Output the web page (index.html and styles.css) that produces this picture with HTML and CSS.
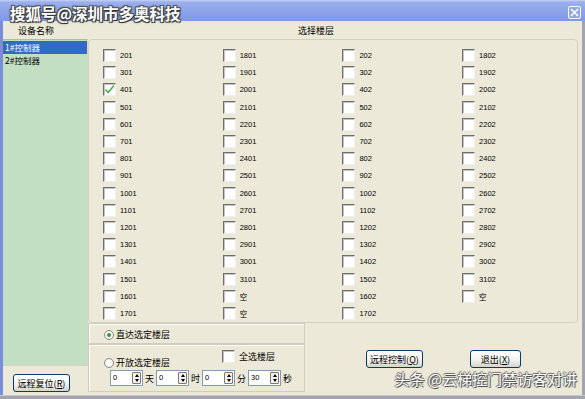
FILE: index.html
```html
<!DOCTYPE html>
<html>
<head>
  <meta charset="utf-8">
  <title>选择楼层</title>
  <link rel="stylesheet" href="styles.css">
</head>
<body>
  <div class="window">
    <div class="titlebar">
      <span class="mark">搜狐号@深圳市多奥科技</span>
      <span class="close">
        <svg width="9" height="9" viewBox="0 0 9 9"><path d="M1 1 L8 8 M8 1 L1 8" stroke="#fff" stroke-width="1.6"/></svg>
      </span>
    </div>

    <div class="main">
      <div class="left">
        <div class="head">设备名称</div>
        <ul class="list">
          <li class="sel">1#控制器</li>
          <li>2#控制器</li>
        </ul>
        <div class="left-foot">
          <button class="btn btn-reset">远程复位(<u>R</u>)</button>
        </div>
      </div>

      <div class="right">
        <div class="head head-r">选择楼层</div>
        <div class="floors">
          <label class="floor"><span class="box"></span>201</label>
          <label class="floor"><span class="box"></span>301</label>
          <label class="floor"><span class="box">
            <svg width="11" height="11" viewBox="0 0 11 11"><path d="M1.5 5.5 L4.2 8.6 L10 1.5" fill="none" stroke="#4caf4c" stroke-width="1.6"/></svg>
          </span>401</label>
          <label class="floor"><span class="box"></span>501</label>
          <label class="floor"><span class="box"></span>601</label>
          <label class="floor"><span class="box"></span>701</label>
          <label class="floor"><span class="box"></span>801</label>
          <label class="floor"><span class="box"></span>901</label>
          <label class="floor"><span class="box"></span>1001</label>
          <label class="floor"><span class="box"></span>1101</label>
          <label class="floor"><span class="box"></span>1201</label>
          <label class="floor"><span class="box"></span>1301</label>
          <label class="floor"><span class="box"></span>1401</label>
          <label class="floor"><span class="box"></span>1501</label>
          <label class="floor"><span class="box"></span>1601</label>
          <label class="floor"><span class="box"></span>1701</label>

          <label class="floor"><span class="box"></span>1801</label>
          <label class="floor"><span class="box"></span>1901</label>
          <label class="floor"><span class="box"></span>2001</label>
          <label class="floor"><span class="box"></span>2101</label>
          <label class="floor"><span class="box"></span>2201</label>
          <label class="floor"><span class="box"></span>2301</label>
          <label class="floor"><span class="box"></span>2401</label>
          <label class="floor"><span class="box"></span>2501</label>
          <label class="floor"><span class="box"></span>2601</label>
          <label class="floor"><span class="box"></span>2701</label>
          <label class="floor"><span class="box"></span>2801</label>
          <label class="floor"><span class="box"></span>2901</label>
          <label class="floor"><span class="box"></span>3001</label>
          <label class="floor"><span class="box"></span>3101</label>
          <label class="floor"><span class="box"></span>空</label>
          <label class="floor"><span class="box"></span>空</label>

          <label class="floor"><span class="box"></span>202</label>
          <label class="floor"><span class="box"></span>302</label>
          <label class="floor"><span class="box"></span>402</label>
          <label class="floor"><span class="box"></span>502</label>
          <label class="floor"><span class="box"></span>602</label>
          <label class="floor"><span class="box"></span>702</label>
          <label class="floor"><span class="box"></span>802</label>
          <label class="floor"><span class="box"></span>902</label>
          <label class="floor"><span class="box"></span>1002</label>
          <label class="floor"><span class="box"></span>1102</label>
          <label class="floor"><span class="box"></span>1202</label>
          <label class="floor"><span class="box"></span>1302</label>
          <label class="floor"><span class="box"></span>1402</label>
          <label class="floor"><span class="box"></span>1502</label>
          <label class="floor"><span class="box"></span>1602</label>
          <label class="floor"><span class="box"></span>1702</label>

          <label class="floor"><span class="box"></span>1802</label>
          <label class="floor"><span class="box"></span>1902</label>
          <label class="floor"><span class="box"></span>2002</label>
          <label class="floor"><span class="box"></span>2102</label>
          <label class="floor"><span class="box"></span>2202</label>
          <label class="floor"><span class="box"></span>2302</label>
          <label class="floor"><span class="box"></span>2402</label>
          <label class="floor"><span class="box"></span>2502</label>
          <label class="floor"><span class="box"></span>2602</label>
          <label class="floor"><span class="box"></span>2702</label>
          <label class="floor"><span class="box"></span>2802</label>
          <label class="floor"><span class="box"></span>2902</label>
          <label class="floor"><span class="box"></span>3002</label>
          <label class="floor"><span class="box"></span>3102</label>
          <label class="floor"><span class="box"></span>空</label>
        </div>

        <div class="bottom">
          <div class="opts">
            <div class="panel p1">
              <span class="radio on"></span>直达选定楼层
            </div>
            <div class="panel p2">
              <div class="opt-row">
                <span class="opt-radio"><span class="radio"></span>开放选定楼层</span>
                <span class="opt-check"><span class="box"></span>全选楼层</span>
              </div>
              <div class="spins">
                <span class="spin"><span class="v">0</span><span class="arr"><i class="up"></i><i class="down"></i></span></span>天
                <span class="spin"><span class="v">0</span><span class="arr"><i class="up"></i><i class="down"></i></span></span>时
                <span class="spin"><span class="v">0</span><span class="arr"><i class="up"></i><i class="down"></i></span></span>分
                <span class="spin"><span class="v">30</span><span class="arr"><i class="up"></i><i class="down"></i></span></span>秒
              </div>
            </div>
          </div>
          <div class="actions">
            <button class="btn btn-remote">远程控制(<u>Q</u>)</button>
            <button class="btn btn-exit">退出(<u>X</u>)</button>
          </div>
        </div>
      </div>
    </div>
    <div class="frame-bottom"></div>

    <div class="mark2">头条 @云梯控门禁访客对讲</div>
  </div>
</body>
</html>
```

FILE: styles.css
```css
* {
  box-sizing: border-box;
}

body {
  margin: 0;
  width: 585px;
  height: 399px;
  overflow: hidden;
  font-family: "Noto Sans CJK SC", sans-serif;
  font-size: 9px;
  color: #000;
  background: #ece9d8;
}

.window {
  position: relative;
  width: 585px;
  height: 399px;
  display: flex;
  flex-direction: column;
  background: #ece9d8;
}

/* title bar */
.titlebar {
  height: 21px;
  flex: none;
  display: flex;
  justify-content: space-between;
  align-items: flex-start;
  padding: 0 4px 0 10px;
  background: linear-gradient(#c6d2f6 0, #9cb1ee 2px, #8ca4ea 50%, #7f99e5 100%);
}

.mark {
  position: relative;
  z-index: 2;
  margin-top: 4px;
  font-size: 15.5px;
  font-weight: bold;
  line-height: 19px;
  color: #fff;
  white-space: nowrap;
  text-shadow: 1px 1px 0 #333, -1px -1px 0 #555, 1px -1px 0 #555, -1px 1px 0 #555, 0 0 3px #222;
}

.close {
  width: 13px;
  height: 13px;
  margin-top: 6px;
  display: flex;
  align-items: center;
  justify-content: center;
  border: 1px solid #fff;
  border-radius: 2px;
  background: #91a7eb;
}

/* body */
.main {
  flex: 1;
  display: flex;
  border-left: 3px solid #7a8fd9;
  border-right: 3px solid #a4a4ae;
}

.frame-bottom {
  height: 4px;
  flex: none;
  background: #a4a4ae;
  border-top: 1px solid #c8c8cc;
}

.head {
  height: 18px;
  flex: none;
  display: flex;
  align-items: center;
  padding-left: 15px;
}

.left {
  width: 85px;
  display: flex;
  flex-direction: column;
}

.list {
  flex: 1;
  margin: 0;
  padding: 1px 0 0;
  list-style: none;
  background: #c3dfc3;
  border-top: 1px solid #b8b8aa;
  border-right: 1px solid #d8d6c8;
}

.list li {
  height: 12.5px;
  line-height: 12.5px;
  font-size: 8.5px;
  padding-left: 2px;
  white-space: nowrap;
}

.list li.sel {
  background: #316ac5;
  color: #fff;
}

.left-foot {
  height: 30px;
  flex: none;
  padding: 8px 0 0 10px;
  border-top: 1px solid #d3d1c3;
}

.right {
  flex: 1;
  display: flex;
  flex-direction: column;
}

.head-r {
  padding-left: 210px;
}

/* floor grid */
.floors {
  width: 490px;
  height: 284px;
  flex: none;
  display: grid;
  grid-auto-flow: column;
  grid-template-rows: repeat(16, 17.2px);
  grid-template-columns: repeat(4, 119.7px);
  align-items: center;
  padding: 7px 0 0 14px;
  border: 1px solid #d0d0bf;
  border-radius: 4px;
}

.floor {
  display: flex;
  align-items: center;
  gap: 4px;
  font-family: "Liberation Sans", "Noto Sans CJK SC", sans-serif;
  font-size: 7.5px;
  white-space: nowrap;
}

.box {
  width: 13px;
  height: 13px;
  flex: none;
  display: flex;
  align-items: center;
  justify-content: center;
  background: #fff;
  border-top: 1px solid #6e6e6e;
  border-left: 1px solid #6e6e6e;
  border-right: 1px solid #efefef;
  border-bottom: 1px solid #efefef;
  box-shadow: inset 1px 1px 0 #c4c4c4;
}

/* lower part */
.bottom {
  flex: 1;
  display: flex;
}

.opts {
  width: 217px;
  display: flex;
  flex-direction: column;
}

.panel {
  border: 1px solid #cfcdbf;
  box-shadow: inset 1px 1px 0 #fbfbf8;
}

.p1 {
  height: 21px;
  flex: none;
  display: flex;
  align-items: center;
  gap: 2px;
  padding: 2px 0 0 15px;
}

.p2 {
  flex: 1;
  margin-bottom: 3px;
  padding: 5px 0 0 15px;
}

.radio {
  position: relative;
  width: 10px;
  height: 10px;
  flex: none;
  border: 1px solid #8b8b86;
  border-radius: 50%;
  background: radial-gradient(#fff 40%, #e4e3dc);
}

.radio.on::after {
  content: "";
  position: absolute;
  left: 2px;
  top: 2px;
  width: 4px;
  height: 4px;
  border-radius: 50%;
  background: #3f8f3f;
}

.opt-row {
  height: 14px;
  display: flex;
  align-items: flex-start;
}

.opt-radio {
  width: 118px;
  margin-top: 6px;
  display: flex;
  align-items: center;
  gap: 2px;
}

.opt-check {
  display: flex;
  align-items: center;
  gap: 4px;
}

.spins {
  margin: 6px 0 0 6px;
  display: flex;
  align-items: center;
  gap: 2px;
}

.spin {
  width: 33px;
  height: 16px;
  display: flex;
  background: #fff;
  border: 1px solid #7f9db9;
}

.spin .v {
  flex: 1;
  padding-left: 2px;
  font-family: "Liberation Sans", sans-serif;
  font-size: 7.5px;
  line-height: 14px;
}

.arr {
  width: 9px;
  margin: 1px;
  display: flex;
  flex-direction: column;
  align-items: center;
  justify-content: center;
  gap: 2px;
  border: 1px solid #7a7a7a;
  border-radius: 1px;
  background: #f3f1ea;
}

.arr i {
  width: 0;
  height: 0;
  border-left: 2.5px solid transparent;
  border-right: 2.5px solid transparent;
}

.arr .up {
  border-bottom: 3px solid #000;
}

.arr .down {
  border-top: 3px solid #000;
}

.actions {
  flex: 1;
  display: flex;
  align-items: flex-start;
  gap: 47px;
  padding: 27px 0 0 61px;
}

.btn {
  height: 18px;
  padding: 0;
  font-family: "Noto Sans CJK SC", sans-serif;
  font-size: 9px;
  color: #000;
  border: 1px solid #003c74;
  border-radius: 3px;
  background: linear-gradient(#fff, #f4f3ee 55%, #d8d3c6);
}

.btn u {
  text-decoration: underline;
}

.btn-reset {
  width: 57px;
}

.btn-remote {
  width: 57px;
}

.btn-exit {
  width: 51px;
}

/* watermark over the bottom right */
.mark2 {
  position: absolute;
  right: 8px;
  top: 369px;
  font-size: 15px;
  line-height: 20px;
  color: #fff;
  white-space: nowrap;
  text-shadow: 1px 1px 0 #555, -1px 0 0 #777, 0 -1px 0 #777, 0 0 2px #333;
}
```
